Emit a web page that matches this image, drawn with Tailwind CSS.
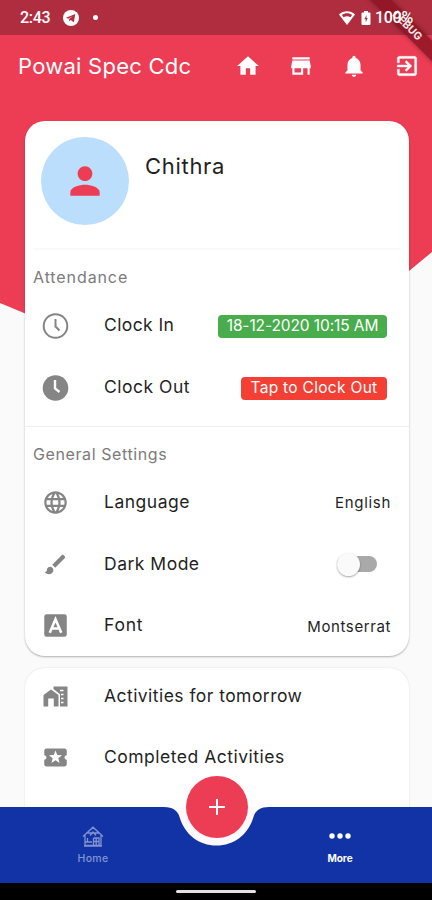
<!DOCTYPE html>
<html lang="en">
<head>
<meta charset="utf-8">
<meta name="viewport" content="width=device-width, initial-scale=1">
<title>Powai Spec Cdc</title>
<script src="https://cdn.jsdelivr.net/npm/@tailwindcss/browser@4"></script>
</head>
<body class="bg-[#fafafa]">
<div class="relative isolate flex h-[900px] w-[432px] flex-col overflow-hidden bg-[#fafafa] font-['Inter',sans-serif] text-[#1f1f1f]">
  <!-- Slanted backdrop with the darker strip behind the status bar -->
  <svg class="absolute inset-0 -z-20" width="432" height="330" viewBox="0 0 432 330"><path fill="#ec3d54" d="M0 0H432V252L409 271 340 328 60 328 0 303Z"/><path fill="#b02d3f" d="M0 0H432V35H0Z"/></svg>

  <!-- Corner ribbon, under the system status icons -->
  <div class="absolute top-[19px] right-[-37.500px] -z-10 flex h-[14px] w-[126px] rotate-45 items-center justify-center bg-[#8f1425]/85 text-[10.500px] font-bold text-white/90 shadow-[0_0_5px_rgba(0,0,0,0.4)]">DEBUG</div>

  <!-- Status bar -->
  <header class="flex h-[35px] shrink-0 items-center pl-[20px] pr-[19px] text-white">
    <span class="w-[31px] text-[16px] font-medium tracking-[-0.3px] font-['Roboto',sans-serif]">2:43</span>
    <svg class="ml-[12px]" width="16" height="16" viewBox="0 0 16 16"><circle cx="8" cy="8" r="8" fill="#fff"/><path d="M3 7.8 12.3 4 10.8 12.2 7.7 10 6.3 11.4 6.1 9 10 5.9 5.2 8.7Z" fill="#b02d3f"/></svg>
    <i class="ml-[14px] size-[5px] rounded-full bg-white"></i>
    <svg class="ml-auto" width="16" height="14" viewBox="0 0 16 14"><path d="M8 14 0 3.6C4.500-.8 11.500-.8 16 3.600Z" fill="#fff"/><path d="M2.900 4C6 1.600 10 1.600 13.100 4L11.400 6.200C9.300 4.900 6.700 4.900 4.600 6.200Z" fill="#b02d3f"/></svg>
    <svg class="ml-[6px]" width="10" height="14" viewBox="0 0 10 14"><path d="M3 0H7V1.500H8.500Q9.500 1.500 9.500 2.500V13Q9.500 14 8.500 14H1.500Q.5 14 .5 13V2.500Q.5 1.500 1.500 1.500H3Z" fill="#fff"/><path d="M5.500 4 3.400 8.300H4.700V11.500L6.700 7H5.500Z" fill="#b02d3f"/></svg>
    <span class="ml-[4px] w-[38px] whitespace-nowrap text-[16px] font-medium tracking-[-0.3px] font-['Roboto',sans-serif]">100%</span>
  </header>

  <!-- App bar -->
  <div class="flex h-[62px] shrink-0 items-center pl-[18px] pr-[12px] text-white">
    <h1 class="whitespace-nowrap text-[22px] tracking-[0.25px]">Powai Spec Cdc</h1>
    <div class="ml-auto flex items-center gap-[27px]">
      <svg width="26" height="26" viewBox="0 0 24 24" fill="currentColor"><path d="M10 20v-6h4v6h5v-8h3L12 3 2 12h3v8z"/></svg>
      <svg width="26" height="26" viewBox="0 0 24 24" fill="currentColor"><path d="M20 4H4v2h16V4zm1 10v-2l-1-5H4l-1 5v2h1v6h10v-6h4v6h2v-6h1zm-9 4H6v-4h6v4z"/></svg>
      <svg width="26" height="26" viewBox="0 0 24 24" fill="currentColor"><path d="M12 22c1.100 0 2-.9 2-2h-4c0 1.100.89 2 2 2zm6-6v-5c0-3.070-1.640-5.640-4.500-6.320V4c0-.83-.67-1.500-1.500-1.500s-1.500.67-1.500 1.500v.68C7.630 5.360 6 7.920 6 11v5l-2 2v1h16v-1l-2-2z"/></svg>
      <svg width="26" height="26" viewBox="0 0 24 24" fill="currentColor" stroke="currentColor" stroke-width=".3"><path d="M10.090 15.590 11.500 17l5-5-5-5-1.410 1.410L12.670 11H3v2h9.670l-2.580 2.590zM19 3H5c-1.110 0-2 .9-2 2v4h2V5h14v14H5v-4H3v4c0 1.100.89 2 2 2h14c1.100 0 2-.9 2-2V5c0-1.100-.9-2-2-2z"/></svg>
    </div>
  </div>

  <main class="flex min-h-0 flex-1 flex-col gap-[12px] px-[25px] pt-[24px] pr-[23px]">
    <section class="h-[535px] shrink-0 rounded-[20px] bg-white shadow-[0_1px_2px_rgba(0,0,0,0.3)]">
      <div class="mr-2 ml-2 flex h-[129px] border-b-2 border-[#f9f9f9] pt-4 pl-2">
        <div class="flex size-[88px] items-center justify-center rounded-full bg-[#badefb]">
          <svg width="44" height="44" viewBox="0 0 24 24" fill="#ec3d54"><path d="M12 12c2.210 0 4-1.790 4-4s-1.790-4-4-4-4 1.790-4 4 1.790 4 4 4zm0 2c-2.670 0-8 1.340-8 4v2h16v-2c0-2.660-5.330-4-8-4z"/></svg>
        </div>
        <h2 class="ml-[16px] pt-[13px] text-[22px] leading-[32px] tracking-[0.7px]">Chithra</h2>
      </div>

      <h3 class="h-[44px] pt-[15px] pl-[8px] text-[16px] leading-[24px] tracking-[0.9px] text-[#7b7b7b]">Attendance</h3>
      <div class="flex h-[62px] items-center pr-[22px] pl-[17px]">
        <svg width="27" height="27" viewBox="0 0 27 27" fill="none" stroke="#858585"><circle cx="13.500" cy="14" r="11.800" stroke-width="2"/><path d="M13.500 7V14.500L17.500 18.500" stroke-width="2"/></svg>
        <span class="ml-[35px] text-[17.500px] tracking-[0.4px]">Clock In</span>
        <span class="mt-[2px] ml-auto flex h-[23px] w-[169px] items-center justify-center whitespace-nowrap rounded-[4px] bg-[#49ad4d] text-[15.5px] tracking-[-0.1px] text-white">18-12-2020 10:15 AM</span>
      </div>
      <div class="flex h-[62px] items-center pr-[22px] pl-[17px]">
        <svg width="27" height="27" viewBox="0 0 27 27"><circle cx="13.500" cy="14" r="12.800" fill="#858585"/><path d="M13 6V14.500L17.500 18" fill="none" stroke="#fff" stroke-width="2.400"/></svg>
        <span class="ml-[35px] text-[17.500px] tracking-[0.5px]">Clock Out</span>
        <span class="mt-[2px] ml-auto flex h-[23px] w-[146px] items-center justify-center whitespace-nowrap rounded-[4px] bg-[#f44034] text-[15.5px] tracking-[0.3px] text-white">Tap to Clock Out</span>
      </div>

      <h3 class="mt-[8px] h-[45px] border-t border-[#efefef] pt-[15px] pl-[8px] text-[16px] leading-[24px] tracking-[0.6px] text-[#7b7b7b]">General Settings</h3>
      <div class="flex h-[62px] items-center pr-[18px] pl-[17px]">
        <svg width="27" height="27" viewBox="0 0 24 24" fill="#858585"><path d="M11.990 2C6.470 2 2 6.480 2 12s4.470 10 9.990 10C17.520 22 22 17.520 22 12S17.520 2 11.990 2zm6.930 6h-2.950c-.32-1.250-.78-2.450-1.380-3.560 1.840.63 3.370 1.910 4.330 3.560zM12 4.040c.83 1.200 1.480 2.530 1.910 3.960h-3.820c.43-1.430 1.080-2.760 1.910-3.960zM4.260 14C4.100 13.360 4 12.690 4 12s.1-1.360.26-2h3.380c-.08.66-.14 1.320-.14 2s.06 1.340.14 2H4.260zm.82 2h2.950c.32 1.250.78 2.450 1.380 3.560-1.840-.63-3.370-1.900-4.330-3.560zm2.950-8H5.080c.96-1.660 2.490-2.930 4.330-3.560C8.810 5.550 8.350 6.750 8.030 8zM12 19.960c-.83-1.200-1.480-2.530-1.910-3.960h3.820c-.43 1.430-1.080 2.760-1.910 3.960zM14.340 14H9.660c-.09-.66-.16-1.320-.16-2s.07-1.350.16-2h4.680c.09.65.16 1.320.16 2s-.07 1.340-.16 2zm.25 5.560c.6-1.110 1.060-2.310 1.380-3.560h2.950c-.96 1.650-2.490 2.930-4.330 3.560zM16.360 14c.08-.66.14-1.320.14-2s-.06-1.340-.14-2h3.380c.16.64.26 1.310.26 2s-.1 1.360-.26 2h-3.380z"/></svg>
        <span class="ml-[35px] text-[17.500px] tracking-[0.5px]">Language</span>
        <span class="ml-auto pt-[3px] text-[15px] tracking-[0.7px]">English</span>
      </div>
      <div class="flex h-[62px] items-center pr-[32px] pl-[17px]">
        <svg width="27" height="27" viewBox="-.5 -.5 25 25" fill="#858585"><path d="M7 14c-1.660 0-3 1.340-3 3 0 1.310-1.160 2-2 2 .92 1.220 2.490 2 4 2 2.210 0 4-1.790 4-4 0-1.660-1.340-3-3-3zm13.710-9.370-1.340-1.340c-.39-.39-1.020-.39-1.410 0L9 12.250 11.750 15l8.960-8.960c.39-.39.39-1.020 0-1.410z"/></svg>
        <span class="ml-[35px] text-[17.500px] tracking-[0.5px]">Dark Mode</span>
        <span class="ml-auto flex h-[16px] w-[40px] items-center rounded-full bg-[#a9a9a9]"><i class="size-[23px] shrink-0 rounded-full bg-[#fafafa] shadow-[0_1px_2px_rgba(0,0,0,0.35)]"></i></span>
      </div>
      <div class="flex h-[61px] items-center pr-[18px] pl-[17px]">
        <svg width="27" height="27" viewBox="0 0 24 24"><rect x="2" y="2" width="20" height="20" rx="2" fill="#858585"/><path d="M6.900 18.500 12 6.500 17.100 18.500M8.600 14.700H15.400" fill="none" stroke="#fff" stroke-width="2.300"/></svg>
        <span class="ml-[35px] text-[17.500px] tracking-[0.8px]">Font</span>
        <span class="ml-auto pt-[3px] text-[15px] tracking-[0.6px]">Montserrat</span>
      </div>
    </section>

    <section class="h-[220px] shrink-0 rounded-[20px] bg-white shadow-[0_0_2px_rgba(0,0,0,0.12)]">
      <div class="flex h-[57px] items-center pl-[17px]">
        <svg width="27" height="27" viewBox="0 0 27 27" fill="#858585"><path d="M1.500 12 9 6.500 16.500 12V23.500H11.800V15.500H6.200V23.500H1.500Z"/><path d="M11.500 3.500H25.500V23.500H18V11.200L11.500 6Z"/><path d="M18 7.500H21.500M19 11.500H21.500M19 15.500H21.500M19 19.500H21.500" fill="none" stroke="#fff" stroke-width="1.600"/></svg>
        <span class="ml-[35px] text-[17.500px] tracking-[0.45px]">Activities for tomorrow</span>
      </div>
      <div class="flex h-[64px] items-center pl-[17px]">
        <svg width="27" height="27" viewBox="0 0 24 24" fill="#858585"><path d="M20 12c0-1.100.9-2 2-2V6c0-1.100-.9-2-2-2H4c-1.100 0-1.990.9-1.990 2v4c1.100 0 1.990.9 1.990 2s-.89 2-2 2v4c0 1.100.9 2 2 2h16c1.100 0 2-.9 2-2v-4c-1.100 0-2-.9-2-2zm-4.420 4.800L12 14.500l-3.580 2.300 1.080-4.120-3.290-2.690 4.240-.25L12 5.800l1.540 3.950 4.240.25-3.290 2.690 1.090 4.110z"/></svg>
        <span class="ml-[35px] text-[17.500px] tracking-[0.5px]">Completed Activities</span>
      </div>
    </section>
  </main>

  <!-- Bottom navigation with a notch for the floating button -->
  <nav class="absolute inset-x-0 bottom-0 flex h-[93px] flex-col">
    <svg class="absolute inset-0" width="432" height="93" viewBox="0 0 432 93"><circle cx="216.500" cy="1" r="39" fill="#fdf8fb"/><path fill="#1233a5" d="M0 0H164C173 0 178 4 179.500 10C185 28 199 38.500 216.500 38.500C234 38.500 248 28 253.500 10C255 4 260 0 269 0H432V93H0Z"/></svg>
    <div class="relative flex h-[76px] justify-between pr-[61px] pl-[62px]">
      <div class="flex w-[62px] flex-col items-center pt-[19px] text-[#8493d2]">
        <svg width="22" height="21" viewBox="0 0 22 21" fill="none" stroke="currentColor" stroke-width="1.300"><path d="M1 10.500 11 1.200 21 10.500M3 9.500V19.500H19V9.500M2 20H20M3 16H10M5.500 7H16.500M8 9.500 11 6 14 9.500M5.500 12V16M11.500 12H17V19M11.500 12V19M14.200 12V19M11.500 15.500H17"/></svg>
        <span class="mt-[5px] text-[10.500px] leading-[14px] font-medium tracking-[0.3px]">Home</span>
      </div>
      <div class="flex w-[62px] flex-col items-center pt-[26px] text-white">
        <svg width="22" height="6" viewBox="0 0 22 6" fill="currentColor"><circle cx="3" cy="3" r="2.700"/><circle cx="11" cy="3" r="2.700"/><circle cx="19" cy="3" r="2.700"/></svg>
        <span class="mt-[12px] text-[10px] leading-[14px] font-bold">More</span>
      </div>
    </div>
    <div class="relative flex h-[17px] items-center justify-center bg-black"><i class="h-[3px] w-[80px] rounded-full bg-[#e6e2e4]"></i></div>
    <button class="absolute top-[-31px] left-[185.500px] flex size-[62px] items-center justify-center rounded-full bg-[#ec3d54]" aria-label="Add">
      <svg width="18" height="18" viewBox="0 0 18 18" stroke="#fff" stroke-width="2"><path d="M9 1V17M1 9H17"/></svg>
    </button>
  </nav>
</div>
</body>
</html>
